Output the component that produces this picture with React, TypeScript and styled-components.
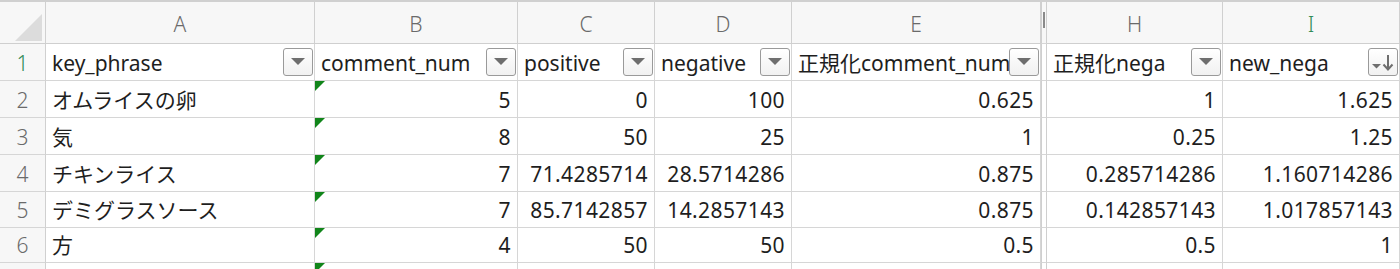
import React from "react";
import styled, { createGlobalStyle } from "styled-components";

const Global = createGlobalStyle`
  html, body { margin: 0; padding: 0; background: #ffffff; }
  body { font-family: "Noto Sans", "Noto Sans CJK JP", sans-serif; }
`;

const COLS = "46px 269px 203px 137px 137px 249px 6px 176px 1fr";

const Sheet = styled.div`
  width: 1400px;
  height: 269px;
  overflow: hidden;
  background: #fff;
  border-top: 2px solid #d0d0d0;
  box-sizing: border-box;
`;

const Row = styled.div<{ $h: number }>`
  display: grid;
  grid-template-columns: ${COLS};
  height: ${(p) => p.$h}px;
`;

const Cell = styled.div<{ $align?: "left" | "right" }>`
  position: relative;
  box-sizing: border-box;
  border-right: 1px solid #d6d6d6;
  border-bottom: 1px solid #d6d6d6;
  display: flex;
  align-items: flex-end;
  justify-content: ${(p) => (p.$align === "right" ? "flex-end" : "flex-start")};
  padding: 0 6px 3px 6px;
  font-family: "Noto Sans", "Noto Sans CJK JP", sans-serif;
  font-size: 21px;
  line-height: 28px;
  letter-spacing: ${(p) => (p.$align === "right" ? "0.4px" : "0")};
  color: #1e1e1e;
  white-space: nowrap;
  overflow: hidden;
  background: #fff;
`;

const ColHead = styled.div<{ $active?: boolean }>`
  box-sizing: border-box;
  border-right: 1px solid #d0d0d0;
  border-bottom: 1px solid #cfcfcf;
  background: #f7f7f7;
  display: flex;
  align-items: center;
  justify-content: center;
  font-size: 21px;
  font-weight: 300;
  color: ${(p) => (p.$active ? "#2f8a57" : "#6a6a6a")};
  padding-top: 2px;
`;

const Corner = styled.div`
  box-sizing: border-box;
  border-right: 1px solid #d0d0d0;
  border-bottom: 1px solid #cfcfcf;
  background: #f7f7f7;
  display: flex;
  align-items: flex-end;
  justify-content: flex-end;
  padding: 0 3px 2px 0;
`;

const CornerTri = styled.div`
  width: 0;
  height: 0;
  border-left: 27px solid transparent;
  border-bottom: 27px solid #dcdcdc;
`;

const Gap = styled.div<{ $head?: boolean }>`
  box-sizing: border-box;
  border-left: 1px solid #cfcfcf;
  border-right: 1px solid #cfcfcf;
  border-bottom: 1px solid #d6d6d6;
  background: ${(p) => (p.$head ? "#f7f7f7" : "#fff")};
  display: flex;
  justify-content: center;
  align-items: center;
`;

const Tick = styled.div`
  width: 2px;
  height: 16px;
  background: #8a8a8a;
  margin-top: -6px;
`;

const RowNum = styled.div<{ $active?: boolean }>`
  box-sizing: border-box;
  border-right: 1px solid #d0d0d0;
  border-bottom: 1px solid #d6d6d6;
  background: #f7f7f7;
  display: flex;
  align-items: flex-end;
  justify-content: center;
  padding-bottom: 3px;
  font-size: 21px;
  line-height: 28px;
  font-weight: 300;
  color: ${(p) => (p.$active ? "#2f8a57" : "#6a6a6a")};
`;

const HeadLabel = styled.span`
  flex: 1 1 auto;
  min-width: 0;
  overflow: hidden;
`;

const FilterBtn = styled.div`
  flex: 0 0 auto;
  width: 30px;
  height: 28px;
  box-sizing: border-box;
  border: 1px solid #9a9a9a;
  border-radius: 3px;
  background: linear-gradient(#ffffff, #f1f1f1);
  display: flex;
  align-items: center;
  justify-content: center;
  margin: 0 -5px 1px 0;
`;

const HeaderCell = styled(Cell)`
  padding: 0 6px 3px 6px;
`;

const Flag = styled.div`
  position: absolute;
  top: 0;
  left: 0;
  width: 0;
  height: 0;
  border-top: 10px solid #11851a;
  border-right: 10px solid transparent;
`;

const DropIcon = () => (
  <svg width="14" height="8" viewBox="0 0 14 8">
    <polygon points="0,0 14,0 7,7" fill="#6e6e6e" />
  </svg>
);

const SortIcon = () => (
  <svg width="24" height="20" viewBox="0 0 24 20">
    <polygon points="1,12 10,12 5.5,16.5" fill="#6e6e6e" />
    <line x1="17" y1="3" x2="17" y2="17" stroke="#6e6e6e" strokeWidth="2" />
    <polyline points="12.5,12.5 17,17.5 21.5,12.5" fill="none" stroke="#6e6e6e" strokeWidth="2" />
  </svg>
);

const headers = ["key_phrase", "comment_num", "positive", "negative", "正規化comment_num"];

const data: string[][] = [
  ["オムライスの卵", "5", "0", "100", "0.625", "1", "1.625"],
  ["気", "8", "50", "25", "1", "0.25", "1.25"],
  ["チキンライス", "7", "71.4285714", "28.5714286", "0.875", "0.285714286", "1.160714286"],
  ["デミグラスソース", "7", "85.7142857", "14.2857143", "0.875", "0.142857143", "1.017857143"],
  ["方", "4", "50", "50", "0.5", "0.5", "1"],
  ["", "", "", "", "", "", ""],
];

const rowHeights = [37, 37, 37, 36, 35, 36];

export default function App() {
  return (
    <>
      <Global />
      <Sheet>
        <Row $h={42}>
          <Corner>
            <CornerTri />
          </Corner>
          <ColHead>A</ColHead>
          <ColHead>B</ColHead>
          <ColHead>C</ColHead>
          <ColHead>D</ColHead>
          <ColHead>E</ColHead>
          <Gap $head>
            <Tick />
          </Gap>
          <ColHead>H</ColHead>
          <ColHead $active>I</ColHead>
        </Row>
        <Row $h={37}>
          <RowNum $active>1</RowNum>
          {headers.map((h) => (
            <HeaderCell key={h}>
              <HeadLabel>{h}</HeadLabel>
              <FilterBtn>
                <DropIcon />
              </FilterBtn>
            </HeaderCell>
          ))}
          <Gap />
          <HeaderCell>
            <HeadLabel>正規化nega</HeadLabel>
            <FilterBtn>
              <DropIcon />
            </FilterBtn>
          </HeaderCell>
          <HeaderCell>
            <HeadLabel>new_nega</HeadLabel>
            <FilterBtn>
              <SortIcon />
            </FilterBtn>
          </HeaderCell>
        </Row>
        {data.map((r, i) => (
          <Row $h={rowHeights[i]} key={i}>
            <RowNum>{i < 5 ? i + 2 : ""}</RowNum>
            <Cell>{r[0]}</Cell>
            <Cell $align="right">
              <Flag />
              {r[1]}
            </Cell>
            <Cell $align="right">{r[2]}</Cell>
            <Cell $align="right">{r[3]}</Cell>
            <Cell $align="right">{r[4]}</Cell>
            <Gap />
            <Cell $align="right">{r[5]}</Cell>
            <Cell $align="right">{r[6]}</Cell>
          </Row>
        ))}
      </Sheet>
    </>
  );
}
